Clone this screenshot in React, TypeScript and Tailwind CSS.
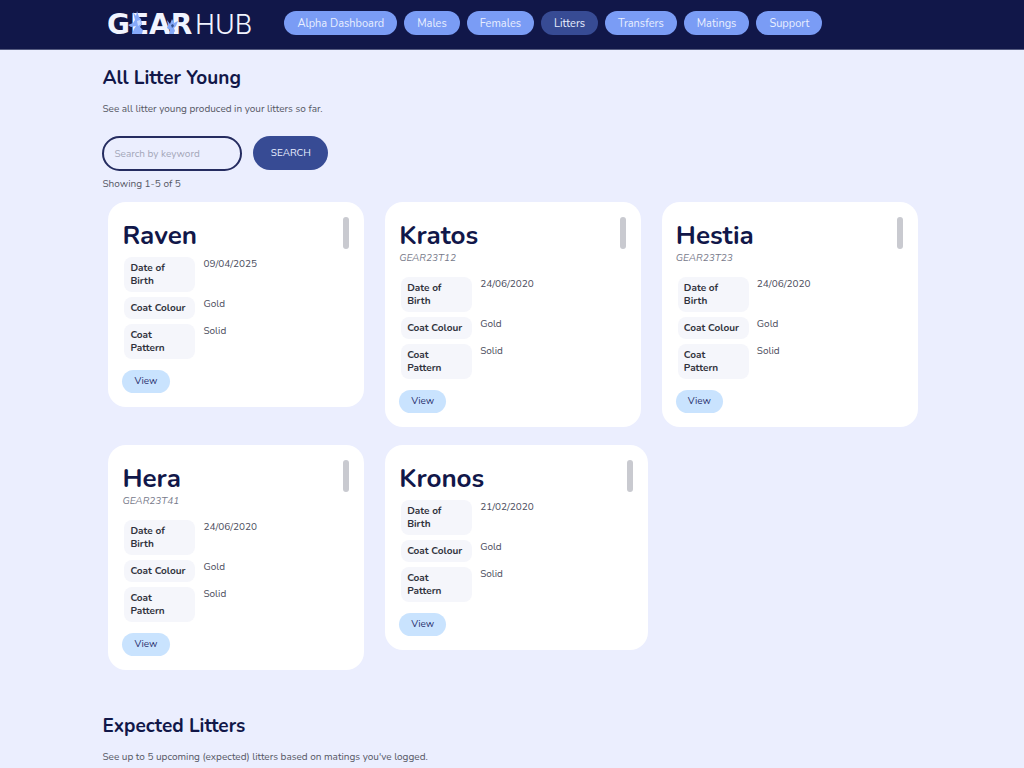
import React from "react";
import clsx from "clsx";

type Young = {
  name: string;
  tag?: string;
  born: string;
  colour: string;
  pattern: string;
  wide?: boolean;
};

const navItems = [
  "Alpha Dashboard",
  "Males",
  "Females",
  "Litters",
  "Transfers",
  "Matings",
  "Support",
];

const young: Young[] = [
  { name: "Raven", born: "09/04/2025", colour: "Gold", pattern: "Solid" },
  { name: "Kratos", tag: "GEAR23T12", born: "24/06/2020", colour: "Gold", pattern: "Solid" },
  { name: "Hestia", tag: "GEAR23T23", born: "24/06/2020", colour: "Gold", pattern: "Solid" },
  { name: "Hera", tag: "GEAR23T41", born: "24/06/2020", colour: "Gold", pattern: "Solid" },
  { name: "Kronos", born: "21/02/2020", colour: "Gold", pattern: "Solid", wide: true },
];

const Logo = () => (
  <svg viewBox="0 0 150 34" className="block h-[34px] w-[150px]" role="img" aria-label="GearHub">
    <text x="-1" y="27" fill="#f1f4ff" fontFamily="DejaVu Sans" fontWeight="700" fontSize="28">
      GEAR
    </text>
    <text x="87" y="27" fill="#f1f4ff" fontFamily="Inter" fontWeight="300" fontSize="27">
      HUB
    </text>
    {/* the two little critters sitting on the letters */}
    <g fill="#86a9fa">
      <path d="M25 5l3 4 1-5 2 6 2 2 1 5-2 3 3 3-1 4H24l2-5 2-3-5 1-3-2 5-2 2-3z" />
      <path d="M59 13l3 4 2-5 2 4 4-2-2 5-2 2 1 3-2 3h-4l1-4-3-2 1-3z" />
    </g>
    <path d="M29 14l3-1 1 4-3 2z" fill="#c5d7ff" />
    <path d="M63 18l2-1 1 2-2 2z" fill="#34508f" />
  </svg>
);

const Header = () => (
  <header className="bg-[#111749] border-b border-[#555b80]">
    <div className="w-4/5 mx-auto pt-[11px] pb-3.5 pl-1.5 flex items-start">
      <a href="#" className="w-44 shrink-0 -my-2 pt-1">
        <Logo />
      </a>
      <nav className="flex gap-[7px]">
        {navItems.map((item) => (
          <a
            key={item}
            href="#"
            className={clsx(
              "h-6 px-[13px] rounded-full text-[11px] leading-[26px] whitespace-nowrap text-[#e9efff]",
              item === "Litters" ? "bg-[#374b94]" : "bg-[#7a9cf5]"
            )}
          >
            {item}
          </a>
        ))}
      </nav>
    </div>
  </header>
);

const Row = ({ label, value }: { label: string; value: string }) => (
  <tr>
    <th
      scope="row"
      className="w-[71px] pt-[5px] pb-1 pl-1.5 pr-2 rounded-lg bg-[#f5f6fb] text-left font-bold text-[#30323c]"
    >
      {label}
    </th>
    <td className="pt-px pl-1.5 align-top text-[#4a4c5c]">{value}</td>
  </tr>
);

const YoungCard = ({ item }: { item: Young }) => (
  <article
    className={clsx("relative rounded-[18px] bg-white p-3.5", item.wide && "-mr-[7px]")}
  >
    <span className="absolute top-[15px] right-[15px] h-8 w-1.5 rounded-full bg-[#c9cad0]" />
    <h2 className="pt-1 text-[26px] leading-8 font-bold text-[#111749]">{item.name}</h2>
    {item.tag && (
      <p className="mb-[7px] text-[10px] leading-[13px] italic text-[#777a8a]">{item.tag}</p>
    )}
    <table className="table-fixed w-full border-separate border-spacing-x-[2px] border-spacing-y-[5px] text-[10px] leading-[13px]">
      <tbody>
        <Row label="Date of Birth" value={item.born} />
        <Row label="Coat Colour" value={item.colour} />
        <Row label="Coat Pattern" value={item.pattern} />
      </tbody>
    </table>
    <button
      type="button"
      className="mt-1.5 block h-[23px] px-3 rounded-full bg-[#c9e3fe] text-[10px] text-[#2c3370]"
    >
      View
    </button>
  </article>
);

export default function App() {
  return (
    <div className="min-h-screen bg-[#ebeefe] font-['Nunito','Open_Sans',sans-serif] text-[#555764]">
      <Header />
      <main className="w-4/5 mx-auto pb-10">
        <h1 className="pt-4 text-[19px] leading-6 font-bold text-[#111749]">All Litter Young</h1>
        <p className="mt-[11px] text-[10px] leading-4">
          See all litter young produced in your litters so far.
        </p>

        <form className="mt-[19px] flex gap-[11px]" onSubmit={(e) => e.preventDefault()}>
          <input
            type="text"
            aria-label="Search by keyword"
            placeholder="Search by keyword"
            className="h-[35px] w-[140px] px-2.5 rounded-full border-2 border-[#252c60] text-[10px] placeholder:text-[#a3a6b8]"
          />
          <button
            type="submit"
            className="h-[34px] w-[75px] rounded-full bg-[#374b94] text-[10px] text-[#e9efff]"
          >
            SEARCH
          </button>
        </form>
        <p className="mt-[5px] text-[10px] leading-4">Showing 1-5 of 5</p>

        <section className="mt-2.5 pl-1.5 pr-1 grid grid-cols-3 items-start gap-x-[21px] gap-y-[18px]">
          {young.map((item) => (
            <YoungCard key={item.name} item={item} />
          ))}
        </section>

        <h1 className="mt-11 text-[19px] leading-6 font-bold text-[#111749]">Expected Litters</h1>
        <p className="mt-[11px] text-[10px] leading-4">
          See up to 5 upcoming (expected) litters based on matings you've logged.
        </p>
      </main>
    </div>
  );
}
